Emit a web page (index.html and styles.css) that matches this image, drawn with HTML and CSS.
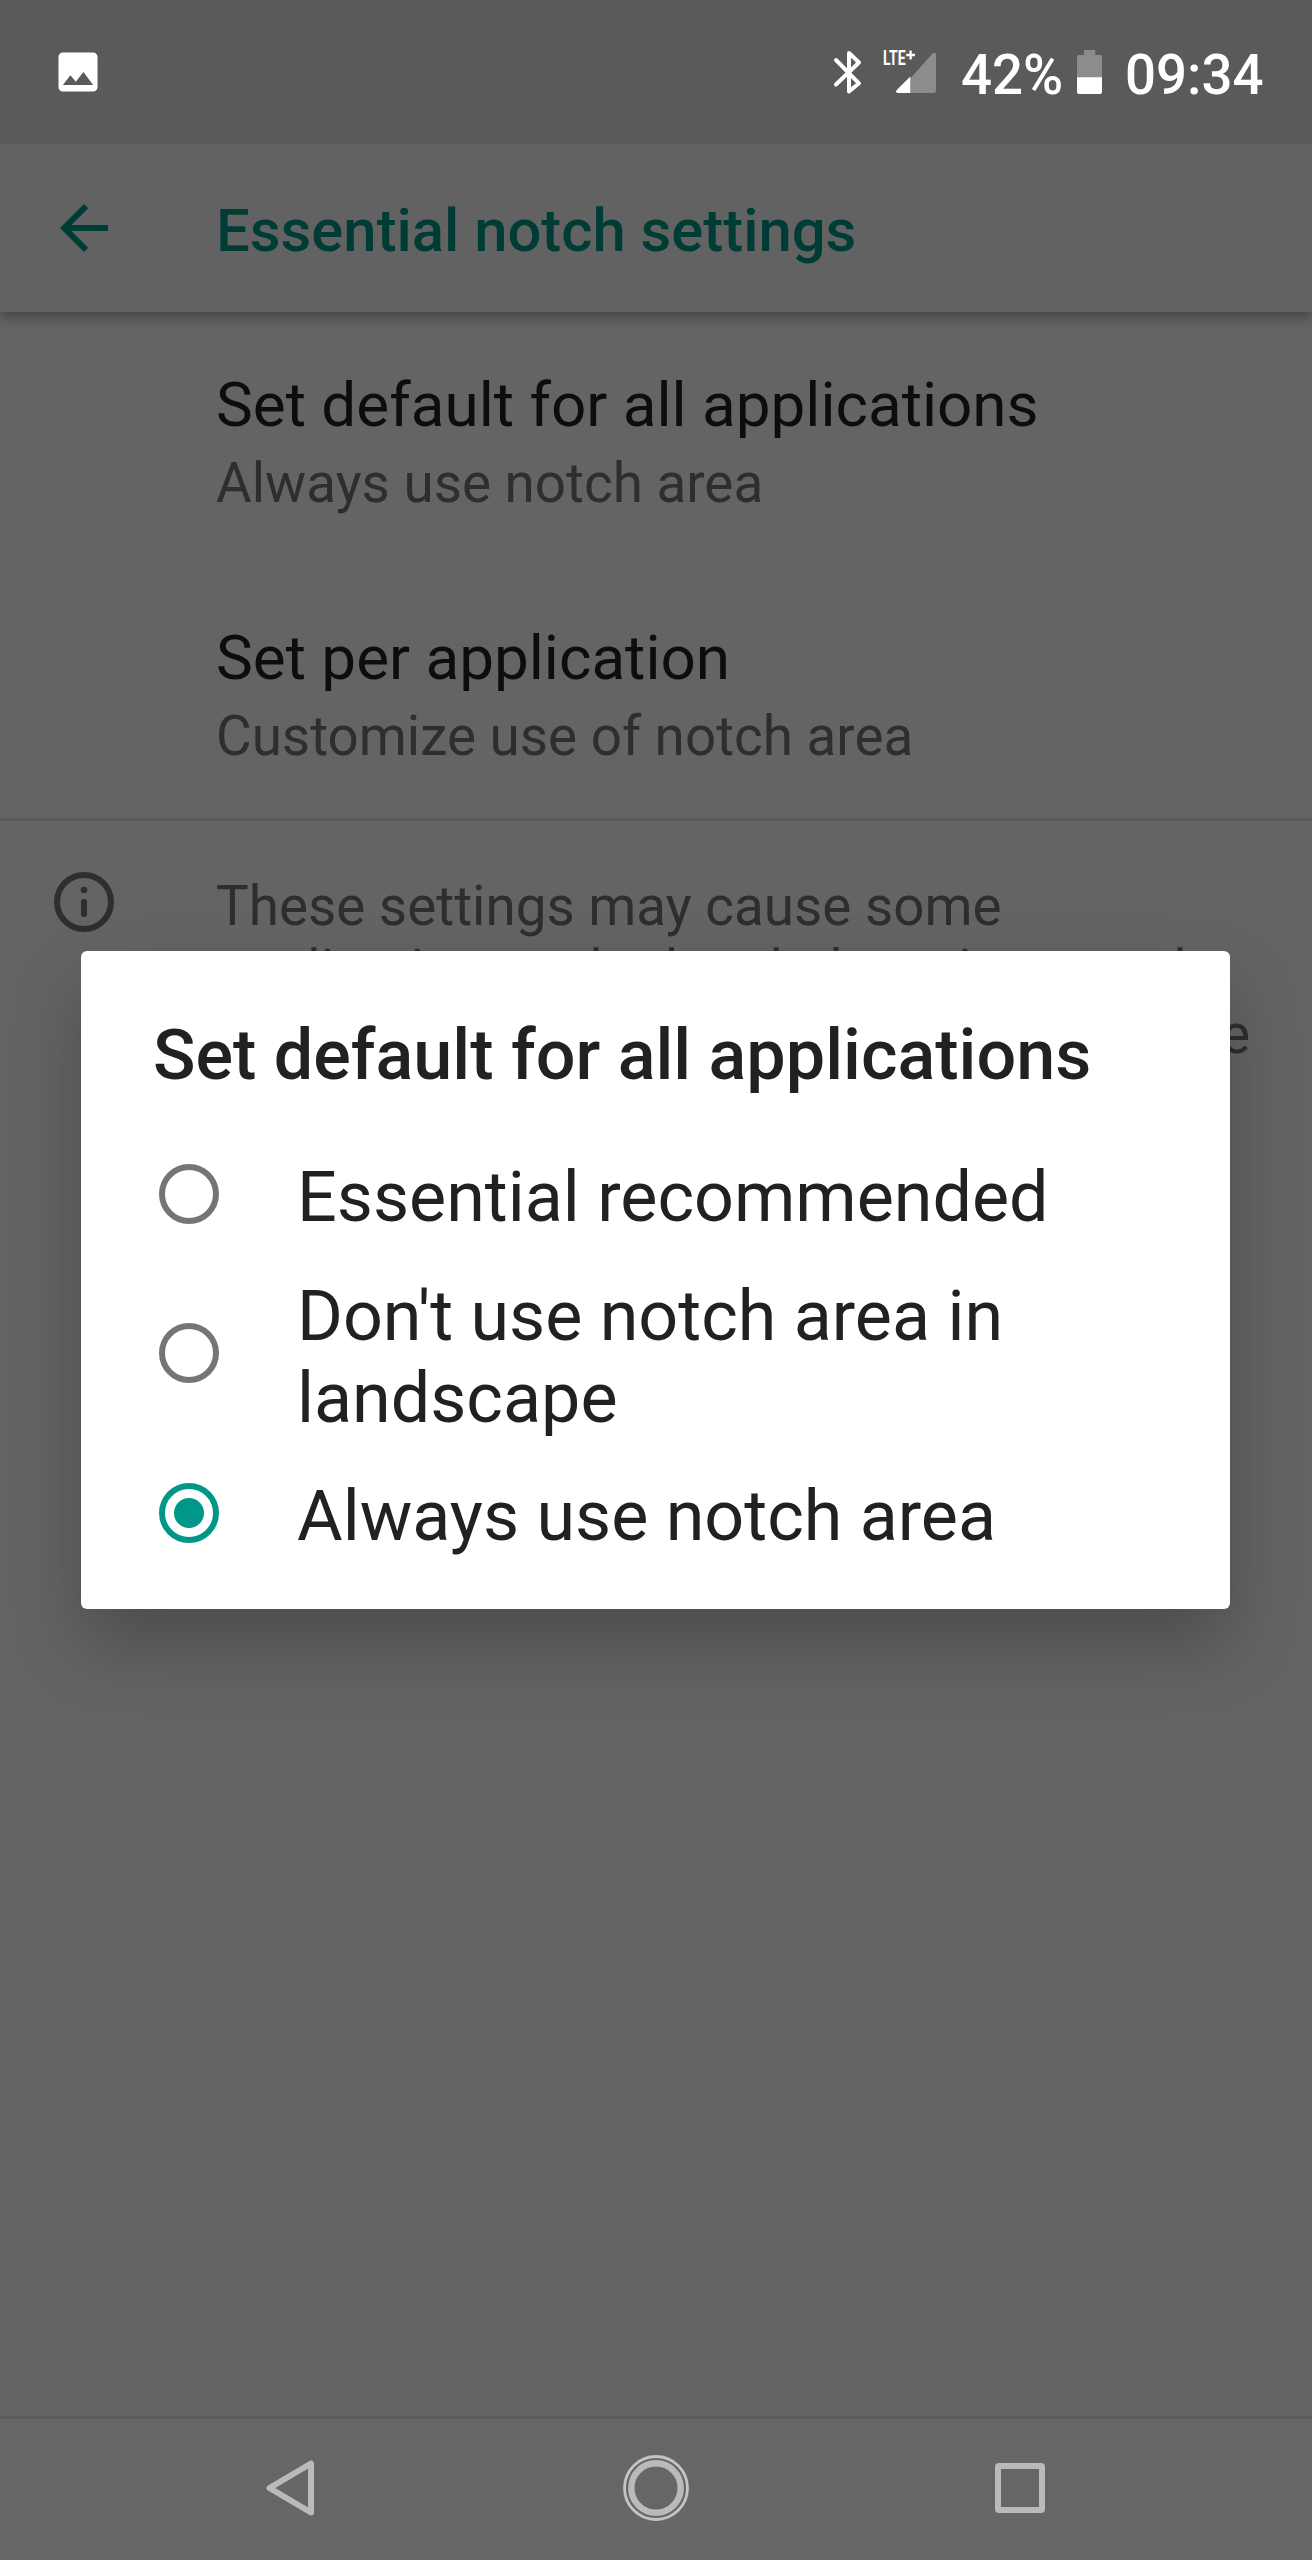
FILE: index.html
```html
<!DOCTYPE html>
<html lang="en">
<head>
<meta charset="utf-8">
<title>Essential notch settings</title>
<link rel="stylesheet" href="styles.css">
</head>
<body>
<div class="screen">
  <header class="status">
    <svg class="status-photo" width="52" height="52" viewBox="0 0 24 24"><path fill="#fff" d="M21 19V5c0-1.1-.9-2-2-2H5c-1.1 0-2 .9-2 2v14c0 1.1.9 2 2 2h14c1.1 0 2-.9 2-2zM8.5 13.5l2.5 3.01L14.500 12l4.500 6H5l3.500-4.500z"/></svg>
    <div class="status-right">
      <svg class="status-bt" width="30" height="48" viewBox="832 48 30 48"><path fill="none" stroke="#fff" stroke-width="4" stroke-linecap="round" stroke-linejoin="round" d="M836 60L859 83.300L849 91.500V53L859 62.500L836 84.500"/></svg>
      <svg class="status-signal" width="56" height="48" viewBox="882 48 56 48">
        <path fill="#8c8c8c" d="M910.300 93V78.500L932.500 53.500Q936 51.500 936 55V91Q936 93 934 93Z"/>
        <path fill="#fff" d="M910.300 76.500V93H898Q894.500 92.500 897 89.800Z"/>
        <text class="lte" x="883" y="65.300" textLength="22.500" lengthAdjust="spacingAndGlyphs">LTE</text>
        <path stroke="#fff" stroke-width="2.300" d="M906.200 55H915M910.600 50.500V59.500"/>
      </svg>
      <span class="percent">42%</span>
      <svg class="status-battery" width="25" height="48" viewBox="1077 48 25 48"><path fill="#8c8c8c" d="M1084 50h11.300v5h4.700q2 0 2 2v21h-25V57q0-2 2-2h5z"/><path fill="#fff" d="M1077 77.300h25V92q0 2-2 2h-21q-2 0-2-2z"/></svg>
      <span class="clock">09:34</span>
    </div>
  </header>

  <div class="appbar">
    <svg class="back" width="72" height="72" viewBox="0 0 24 24"><path fill="#003c36" d="M20 11H7.830l5.590-5.590L12 4l-8 8 8 8 1.410-1.410L7.830 13H20v-2z"/></svg>
    <h1 class="appbar-title">Essential notch settings</h1>
  </div>

  <main class="content">
    <section class="pref">
      <div class="pref-title">Set default for all applications</div>
      <div class="pref-sub">Always use notch area</div>
    </section>
    <section class="pref">
      <div class="pref-title">Set per application</div>
      <div class="pref-sub">Customize use of notch area</div>
    </section>
    <section class="note">
      <svg class="note-icon" width="72" height="72" viewBox="0 0 72 72"><circle cx="36" cy="36" r="27" fill="none" stroke="#2e2e2e" stroke-width="6"/><circle cx="36" cy="24" r="3.300" fill="#2e2e2e"/><path d="M36 36V48" stroke="#2e2e2e" stroke-width="6" stroke-linecap="round"/></svg>
      <div class="note-text">
        <div>These settings may cause some</div>
        <div>applications to look or behave in normal</div>
        <div class="note-last">use in ways that you may not like</div>
      </div>
    </section>
  </main>

  <nav class="nav">
    <svg width="72" height="72" viewBox="254 2452 72 72"><path fill="none" stroke="#bababa" stroke-width="6" stroke-linejoin="round" d="M311 2463.500V2512.500L269.500 2488Z"/></svg>
    <svg width="72" height="72" viewBox="0 0 72 72"><circle cx="36" cy="36" r="31.500" fill="none" stroke="#c4c4c4" stroke-width="2.800"/><circle cx="36" cy="36" r="24.700" fill="none" stroke="#bababa" stroke-width="6.400"/></svg>
    <svg width="72" height="72" viewBox="0 0 72 72"><rect x="12" y="14" width="44" height="44" rx="1" fill="none" stroke="#bababa" stroke-width="6"/></svg>
  </nav>

  <div class="dialog">
    <h2 class="dialog-title">Set default for all applications</h2>
    <div class="option"><span class="radio"></span><span class="option-text">Essential recommended</span></div>
    <div class="option option-tall"><span class="radio"></span><span class="option-text">Don't use notch area in<br>landscape</span></div>
    <div class="option"><span class="radio radio-on"></span><span class="option-text">Always use notch area</span></div>
  </div>
</div>
</body>
</html>
```
FILE: styles.css
```css
* { box-sizing: border-box; }
body { margin: 0; font-family: Roboto, sans-serif; }
svg { display: block; flex: none; overflow: visible; }
h1, h2 { margin: 0; font-weight: 500; }

.screen {
  position: relative;
  display: flex;
  flex-direction: column;
  width: 1312px;
  height: 2560px;
  overflow: hidden;
  background: #646464;
  white-space: nowrap;
}

.status {
  position: relative;
  z-index: 1;
  display: flex;
  justify-content: space-between;
  height: 144px;
  padding: 46px 47px 0 52px;
  background: #5a5a5a;
  color: #fff;
}
.status-right {
  display: flex;
  height: 64px;
  padding-top: 2px;
  font-size: 54.6px;
  font-weight: 500;
  line-height: 54px;
}
.status-signal { margin-left: 20px; }
.lte { font-size: 20.5px; font-weight: 700; fill: #fff; }
.percent { width: 115px; margin-left: 23px; }
.status-battery { margin-left: 1px; }
.clock { width: 140px; margin-left: 23px; }

.appbar {
  position: relative;
  display: flex;
  align-items: center;
  height: 168px;
  padding-left: 48px;
  background: #626262;
  box-shadow: 0 6px 12px rgba(0, 0, 0, .3);
}
.appbar-title {
  margin-left: 96px;
  padding-top: 5px;
  color: #003c36;
  font-size: 59.8px;
  line-height: 70px;
}

.content { flex: 1; }
.pref {
  height: 253px;
  padding: 56px 0 0 216px;
}
.pref-title { color: #0d0d0d; font-size: 62px; line-height: 73px; }
.pref-sub { margin-top: 10px; color: #2e2e2e; font-size: 54.8px; line-height: 64px; }
.note {
  display: flex;
  align-items: flex-start;
  border-top: 3px solid #5a5a5a;
  padding: 45px 62px 0 48px;
}
.note-text {
  flex: 1;
  margin: 8px 0 0 96px;
  color: #2e2e2e;
  font-size: 54.8px;
  line-height: 64px;
}
.note-last { text-align: right; }

.nav {
  display: flex;
  height: 144px;
  padding: 33px 0 0 254px;
  gap: 294px;
  border-top: 3px solid #5a5a5a;
  background: #666;
}

.dialog {
  position: absolute;
  left: 81px;
  top: 951px;
  width: 1149px;
  height: 658px;
  padding: 62px 72px 0;
  border-radius: 6px;
  background: #fff;
  color: #212121;
  box-shadow: 0 36px 72px rgba(0, 0, 0, .24);
}
.dialog-title { height: 109px; font-size: 70.1px; line-height: 84px; }
.option { display: flex; align-items: center; height: 144px; padding-left: 6px; }
.option-tall { height: 174px; margin-bottom: 1px; }
.radio {
  flex: none;
  width: 60px;
  height: 60px;
  border: 6px solid #757575;
  border-radius: 50%;
}
.radio-on {
  border-color: #009688;
  background: radial-gradient(circle, #009688 14.5px, transparent 15.5px);
}
.option-text { margin-left: 78px; padding-top: 5px; font-size: 70px; line-height: 82px; }
.option-tall .option-text { padding-top: 7px; }
```
